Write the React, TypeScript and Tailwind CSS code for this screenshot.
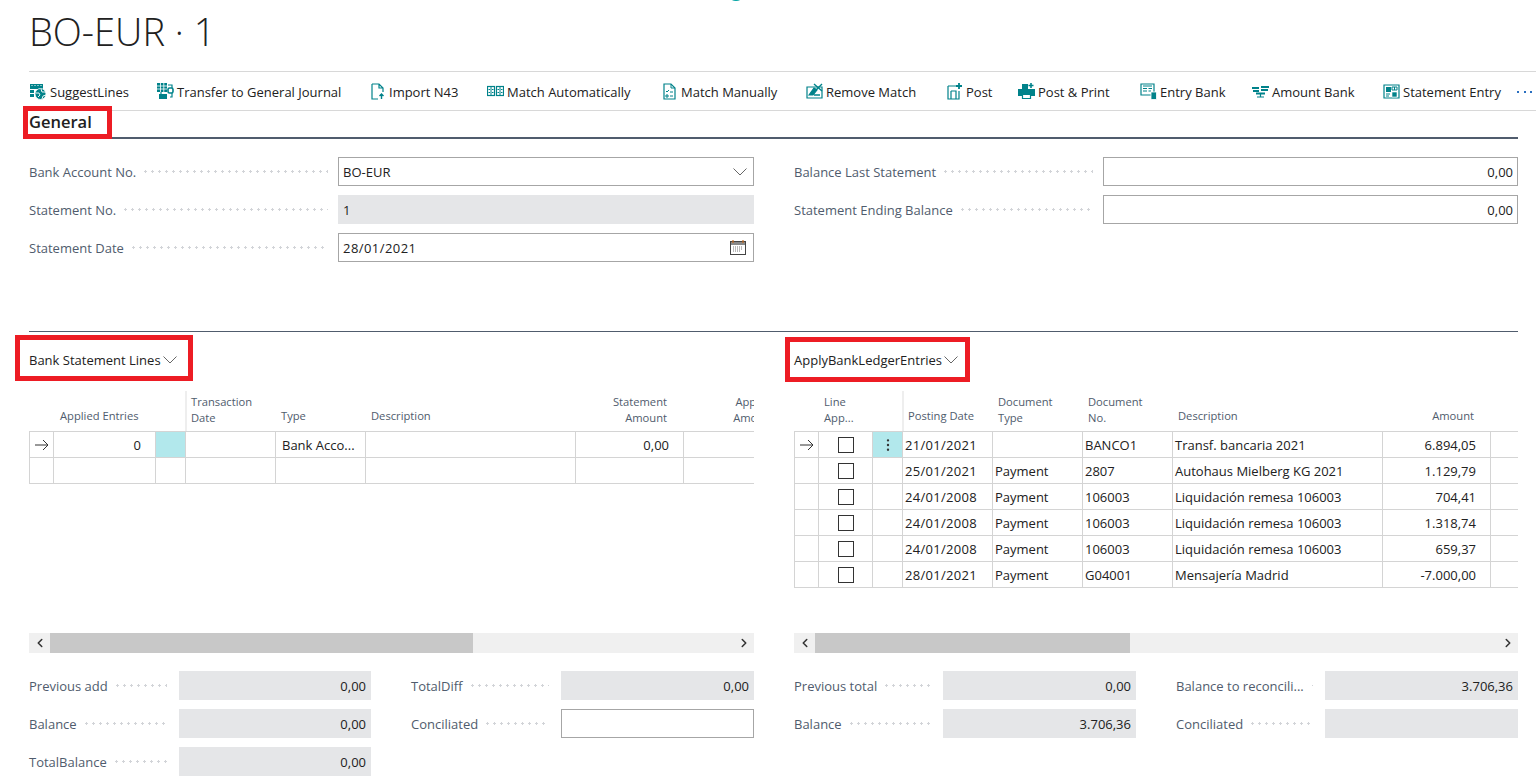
import type { ReactNode } from 'react'
import { ChevronLeft, ChevronRight, MoreVertical } from 'lucide-react'

const TEAL = '#00828a'

function Ico(props: { children: ReactNode }) {
  return (
    <svg width="17" height="17" viewBox="0 0 17 17" fill="none" stroke={TEAL} strokeWidth="1.2" className="shrink-0">
      {props.children}
    </svg>
  )
}

const icons: Record<string, ReactNode> = {
  suggest: (
    <Ico>
      <path d="M0 1h13v5H0z" fill={TEAL} stroke="none" />
      <path d="M1.5 2.5h1M4.5 2.5h1M7.5 2.5h1M10.5 2.5h1" stroke="#fff" strokeWidth="1" />
      <path d="M0 7h4v3H0zM0 11h4v3H0z" fill={TEAL} stroke="none" />
      <circle cx="10.5" cy="11" r="5.5" fill={TEAL} stroke="#fff" strokeWidth="0.8" />
      <path d="M6 10h3l1 2-2 2M11 6l1 3h4M12 16l1-3 3-1" stroke="#fff" strokeWidth="0.9" />
    </Ico>
  ),
  transfer: (
    <Ico>
      <path d="M0 0h10v9H0z" fill={TEAL} stroke="none" />
      <path d="M0 3h10M0 6h10M3.5 0v9M6.8 0v9" stroke="#fff" strokeWidth="0.8" />
      <path d="M11 2h4v12H13" />
      <rect x="11" y="5" width="5" height="5" rx="1.5" fill="#fff" strokeWidth="1.6" />
      <path d="M4 9v2" />
      <rect x="2" y="11" width="8" height="5" fill={TEAL} stroke="none" />
    </Ico>
  ),
  file: (
    <Ico>
      <path d="M3 1h7l4 4v4M10 1v4h4M3 1v15h6" />
      <path d="M12.5 16v-5M10.5 13l2-2 2 2" strokeWidth="1.4" />
    </Ico>
  ),
  matchAuto: (
    <Ico>
      <rect x="0.5" y="3.5" width="7" height="9" />
      <rect x="9.5" y="3.5" width="7" height="9" />
      <path d="M4 3v10M13 3v10M1.5 6.5h1.5M1.5 9.5h1.5M5 6.5h1.5M5 9.5h1.5M10.5 6.5H12M10.5 9.5H12M14 6.5h1.5M14 9.5h1.5" strokeWidth="1" />
    </Ico>
  ),
  matchManual: (
    <Ico>
      <path d="M3 1h7l4 4v11H3z" />
      <path d="M10 1v4h4M5 8l1 1 2-2M9 9h3M5 12h2v2H5zM9 13h3" strokeWidth="1" />
    </Ico>
  ),
  remove: (
    <Ico>
      <path d="M1 4h15v11H1z" />
      <path d="M3 12l5-7 3 2-4 5z" fill={TEAL} />
      <path d="M8 1l8 7M16 1L9 8M8 12h6" strokeWidth="1.4" />
    </Ico>
  ),
  post: (
    <Ico>
      <path d="M2 3h8M2 3v13h11V8" />
      <path d="M5 8h5v8M5 8v8" />
      <path d="M13 0v6M10 3h6" strokeWidth="1.8" />
    </Ico>
  ),
  postPrint: (
    <Ico>
      <path d="M0 6h17v7H13v-2H4v2H0z" fill={TEAL} stroke="none" />
      <path d="M4 1h6v5H4z" fill={TEAL} stroke="none" />
      <path d="M4.5 11.5h8v4h-8z" />
      <path d="M13 0v5M10.5 2.5h5" strokeWidth="1.6" />
    </Ico>
  ),
  entry: (
    <Ico>
      <path d="M1 1h13v11H1z" />
      <path d="M3 3h9M3 5.5h4M3 8h4M8.5 5.5h3.5M8.5 8H11" strokeWidth="1" />
      <rect x="11" y="9" width="5.5" height="7.5" fill={TEAL} stroke="#fff" strokeWidth="0.8" />
    </Ico>
  ),
  amount: (
    <Ico>
      <path d="M0 4h7v2H0zM1 7h6v2H1zM9 3h8v2H9zM9 6h7v2H9z" fill={TEAL} stroke="none" />
      <path d="M4 9.5h9v2H4z" fill={TEAL} stroke="none" />
      <path d="M8.5 11v3M5 14h7" />
    </Ico>
  ),
  statement: (
    <Ico>
      <path d="M1 2h15v13H1z" />
      <path d="M3 4h5v5H3z" fill={TEAL} stroke="none" />
      <path d="M9 4h5v3H9zM11.5 4v3M3 11h4M3 13h3" strokeWidth="1" />
      <path d="M9 9h5v5H9z" fill={TEAL} stroke="#fff" strokeWidth="0.6" />
    </Ico>
  ),
}

const actions = [
  ['suggest', 'SuggestLines', 'w-[127px]'],
  ['transfer', 'Transfer to General Journal', 'w-[212px]'],
  ['file', 'Import N43', 'w-[118px]'],
  ['matchAuto', 'Match Automatically', 'w-[174px]'],
  ['matchManual', 'Match Manually', 'w-[145px]'],
  ['remove', 'Remove Match', 'w-[140px]'],
  ['post', 'Post', 'w-[72px]'],
  ['postPrint', 'Post & Print', 'w-[122px]'],
  ['entry', 'Entry Bank', 'w-[112px]'],
  ['amount', 'Amount Bank', 'w-[131px]'],
  ['statement', 'Statement Entry', 'w-[134px]'],
]

function Chev() {
  return (
    <svg width="14" height="8" viewBox="0 0 14 8" fill="none" stroke="#666" strokeWidth="1" className="shrink-0">
      <path d="M0.5 0.5L7 7l6.5-6.5" />
    </svg>
  )
}

function Box(props: { children?: ReactNode; kind?: 'input' | 'readonly'; right?: boolean }) {
  return (
    <div
      className={[
        'flex h-[29px] min-w-0 flex-1 items-center text-[#212121]',
        props.kind === 'readonly' ? 'bg-[#e5e6e8] px-[5px]' : 'border border-[#a6a6a6] bg-white px-[4px]',
        props.right ? 'justify-end' : 'justify-between',
      ].join(' ')}
    >
      {props.children}
    </div>
  )
}

function Field(props: { label: string; labelW: string; children: ReactNode }) {
  return (
    <div className="flex h-[29px] items-center">
      <div className={'flex shrink-0 items-center ' + props.labelW}>
        <span className="whitespace-nowrap text-[#505c6d]">{props.label}</span>
        <span className="ml-[6px] h-[3px] flex-1 bg-[radial-gradient(circle,#d2d4d8_1px,transparent_1.2px)] bg-[length:7px_3px] bg-repeat-x" />
      </div>
      {props.children}
    </div>
  )
}

function Scrollbar(props: { thumbW: string }) {
  return (
    <div className="flex h-[20px] items-center bg-[#f0f0f0]">
      <div className="flex w-[21px] shrink-0 justify-center">
        <ChevronLeft size={14} strokeWidth={2.6} color="#333" />
      </div>
      <div className="h-full min-w-0 flex-1">
        <div className={'h-full bg-[#c8c8c8] ' + props.thumbW} />
      </div>
      <div className="flex w-[21px] shrink-0 justify-center">
        <ChevronRight size={14} strokeWidth={2.6} color="#333" />
      </div>
    </div>
  )
}

function Th(props: { w: string; right?: boolean; freeze?: boolean; children?: string }) {
  const twoLines = (props.children || '').includes('\n')
  return (
    <div
      className={[
        'relative flex h-[40px] shrink-0 items-end whitespace-pre-line px-[6px] text-[11.2px] leading-[16px] text-[#505c6d]',
        twoLines ? 'pb-[5px]' : 'pb-[7px]',
        props.w,
        props.right ? 'justify-end pr-[16px] text-right' : '',
      ].join(' ')}
    >
      <span>{props.children}</span>
      {props.freeze ? <span className="absolute right-[-2px] top-[-12px] bottom-0 w-[2px] bg-[#eeeeee]" /> : null}
    </div>
  )
}

function Td(props: { w: string; right?: boolean; cls?: string; children?: ReactNode }) {
  return (
    <div
      className={[
        'flex h-[26px] shrink-0 items-center overflow-hidden whitespace-nowrap border-r border-b border-[#d4d4d4] px-[2px] text-[#212121]',
        props.w,
        props.right ? 'justify-end pr-[14px]' : '',
        props.cls || '',
      ].join(' ')}
    >
      {props.children}
    </div>
  )
}

function Arrow() {
  return (
    <svg width="14" height="12" viewBox="0 0 14 12" fill="none" stroke="#333" strokeWidth="1" className="mx-auto">
      <path d="M0 6h13M8 1l5 5-5 5" />
    </svg>
  )
}

function Check() {
  return <span className="mx-auto block h-[16px] w-[16px] border border-[#333] bg-white" />
}

function SubTitle(props: { title: string; box: string }) {
  return (
    <div className="relative flex h-[59px] w-fit items-center gap-[2px] pb-[3px] text-[#212121]">
      <span>{props.title}</span>
      <Chev />
      <div className={'absolute border-[5px] border-[#ed1c24] ' + props.box} />
    </div>
  )
}

const ledger = [
  ['21/01/2021', '', 'BANCO1', 'Transf. bancaria 2021', '6.894,05'],
  ['25/01/2021', 'Payment', '2807', 'Autohaus Mielberg KG 2021', '1.129,79'],
  ['24/01/2008', 'Payment', '106003', 'Liquidación remesa 106003', '704,41'],
  ['24/01/2008', 'Payment', '106003', 'Liquidación remesa 106003', '1.318,74'],
  ['24/01/2008', 'Payment', '106003', 'Liquidación remesa 106003', '659,37'],
  ['28/01/2021', 'Payment', 'G04001', 'Mensajería Madrid', '-7.000,00'],
]

export default function App() {
  return (
    <div className="relative h-[777px] w-[1536px] overflow-hidden bg-white pl-[29px] pr-[18px] font-['Open_Sans','Liberation_Sans',sans-serif] text-[13px] leading-[18px]">
      <div className="absolute left-[727px] top-[-8px] h-[9px] w-[18px] rounded-b-full bg-[#00a3a3]" />

      <div className="flex h-[71px] items-start pt-[7px] text-[38px] font-light leading-[48px] text-[#212121]">BO-EUR · 1</div>

      <div className="-mr-[18px] flex h-[40px] items-center border-y border-[#d8d8d8] pl-[1px] pt-[1px]">
        {actions.map(([icon, label, w]) => (
          <div key={label} className={'flex shrink-0 items-center gap-[3px] whitespace-nowrap text-[#212121] ' + w}>
            {icons[icon]}
            <span>{label}</span>
          </div>
        ))}
        <div className="flex w-[15px] justify-between">
          <span className="h-[2px] w-[2px] bg-[#2a6fc0]" />
          <span className="h-[2px] w-[2px] bg-[#2a6fc0]" />
          <span className="h-[2px] w-[2px] bg-[#2a6fc0]" />
        </div>
      </div>

      <div className="relative flex h-[28px] items-center border-b-2 border-[#505c6d] pb-[4px]">
        <span className="text-[16.5px] font-semibold text-[#212121]">General</span>
        <div className="absolute left-[-6px] top-[-5px] h-[33px] w-[89px] border-[5px] border-[#ed1c24]" />
      </div>

      <div className="flex h-[193px] gap-[40px] border-b border-[#505c6d] pt-[18px]">
        <div className="flex w-[725px] flex-col gap-[9px]">
          <Field label="Bank Account No." labelW="w-[309px] pr-[10px]">
            <Box>
              BO-EUR
              <span className="mr-[2px]"><Chev /></span>
            </Box>
          </Field>
          <Field label="Statement No." labelW="w-[309px] pr-[10px]">
            <Box kind="readonly">1</Box>
          </Field>
          <Field label="Statement Date" labelW="w-[309px] pr-[10px]">
            <Box>
              <span className="tracking-[0.45px]">28/01/2021</span>
              <svg width="16" height="15" viewBox="0 0 16 15" fill="none" className="mr-[3px]">
                <rect x="0.5" y="1.5" width="15" height="13" stroke="#444" fill="#fff" />
                <path d="M1 2h14v3H1z" fill="#888" />
                <path d="M3 0v3M13 0v3" stroke="#c46a1e" strokeWidth="1.2" />
                <path d="M3 7h10M3 9h10M3 11h7" stroke="#777" strokeDasharray="1 1" />
              </svg>
            </Box>
          </Field>
        </div>
        <div className="flex min-w-0 flex-1 flex-col gap-[9px]">
          <Field label="Balance Last Statement" labelW="w-[309px] pr-[10px]">
            <Box right>0,00</Box>
          </Field>
          <Field label="Statement Ending Balance" labelW="w-[309px] pr-[10px]">
            <Box right>0,00</Box>
          </Field>
        </div>
      </div>

      <div className="flex gap-[40px]">
        <div className="w-[725px] min-w-0">
          <SubTitle title="Bank Statement Lines" box="-left-[14px] top-[3px] bottom-[10px] -right-[16px]" />
          <div className="h-[242px] overflow-hidden">
            <div className="flex w-[1000px] border-b border-[#d4d4d4]">
              <Th w="w-[24px]" />
              <Th w="w-[102px] pl-[7px]">Applied Entries</Th>
              <Th w="w-[30px]" freeze />
              <Th w="w-[90px]">{'Transaction\nDate'}</Th>
              <Th w="w-[90px]">Type</Th>
              <Th w="w-[210px]">Description</Th>
              <Th w="w-[108px]" right>{'Statement\nAmount'}</Th>
              <Th w="w-[108px]" right>{'Applied\nAmount'}</Th>
            </div>
            {[0, 1].map((r) => (
              <div key={r} className="flex w-[1000px] border-l border-[#d4d4d4]">
                <Td w="w-[24px]">{r === 0 ? <Arrow /> : null}</Td>
                <Td w="w-[102px]" right>{r === 0 ? '0' : ''}</Td>
                <Td w="w-[30px]" cls={r === 0 ? 'bg-[#b2e8ec]' : ''} />
                <Td w="w-[90px]" />
                <Td w="w-[90px] px-[6px]">{r === 0 ? 'Bank Acco...' : ''}</Td>
                <Td w="w-[210px]" />
                <Td w="w-[108px]" right>{r === 0 ? '0,00' : ''}</Td>
                <Td w="w-[100px]" />
              </div>
            ))}
          </div>
          <Scrollbar thumbW="w-[423px]" />
          <div className="mt-[18px] grid grid-cols-[342px_343px] gap-x-[40px] gap-y-[9px]">
            <Field label="Previous add" labelW="w-[150px] pr-[12px]"><Box kind="readonly" right>0,00</Box></Field>
            <Field label="TotalDiff" labelW="w-[150px] pr-[12px]"><Box kind="readonly" right>0,00</Box></Field>
            <Field label="Balance" labelW="w-[150px] pr-[12px]"><Box kind="readonly" right>0,00</Box></Field>
            <Field label="Conciliated" labelW="w-[150px] pr-[12px]"><Box right /></Field>
            <Field label="TotalBalance" labelW="w-[150px] pr-[12px]"><Box kind="readonly" right>0,00</Box></Field>
          </div>
        </div>

        <div className="min-w-0 flex-1">
          <SubTitle title="ApplyBankLedgerEntries" box="-left-[9px] top-[5px] bottom-[9px] -right-[12px]" />
          <div className="h-[242px] overflow-hidden">
            <div className="flex w-[1000px] border-b border-[#d4d4d4]">
              <Th w="w-[24px]" />
              <Th w="w-[54px]">{'Line\nApp...'}</Th>
              <Th w="w-[30px]" freeze />
              <Th w="w-[90px]">Posting Date</Th>
              <Th w="w-[90px]">{'Document\nType'}</Th>
              <Th w="w-[90px]">{'Document\nNo.'}</Th>
              <Th w="w-[210px]">Description</Th>
              <Th w="w-[108px]" right>Amount</Th>
              <Th w="w-[100px]" />
            </div>
            {ledger.map((row, i) => (
              <div key={i} className="flex w-[1000px] border-l border-[#d4d4d4]">
                <Td w="w-[24px]">{i === 0 ? <Arrow /> : null}</Td>
                <Td w="w-[54px]"><Check /></Td>
                <Td w="w-[30px]" cls={i === 0 ? 'bg-[#b2e8ec]' : ''}>
                  {i === 0 ? <MoreVertical size={16} strokeWidth={1.6} color="#333" className="mx-auto" /> : null}
                </Td>
                <Td w="w-[90px]"><span className="tracking-[0.3px]">{row[0]}</span></Td>
                <Td w="w-[90px]">{row[1]}</Td>
                <Td w="w-[90px]">{row[2]}</Td>
                <Td w="w-[210px]">{row[3]}</Td>
                <Td w="w-[108px]" right>{row[4]}</Td>
                <Td w="w-[100px]" />
              </div>
            ))}
          </div>
          <Scrollbar thumbW="w-[315px]" />
          <div className="mt-[18px] grid grid-cols-[342px_342px] gap-x-[40px] gap-y-[9px]">
            <Field label="Previous total" labelW="w-[149px] pr-[12px]"><Box kind="readonly" right>0,00</Box></Field>
            <Field label="Balance to reconcili..." labelW="w-[149px] pr-[12px]"><Box kind="readonly" right>3.706,36</Box></Field>
            <Field label="Balance" labelW="w-[149px] pr-[12px]"><Box kind="readonly" right>3.706,36</Box></Field>
            <Field label="Conciliated" labelW="w-[149px] pr-[12px]"><Box kind="readonly" right /></Field>
          </div>
        </div>
      </div>
    </div>
  )
}
